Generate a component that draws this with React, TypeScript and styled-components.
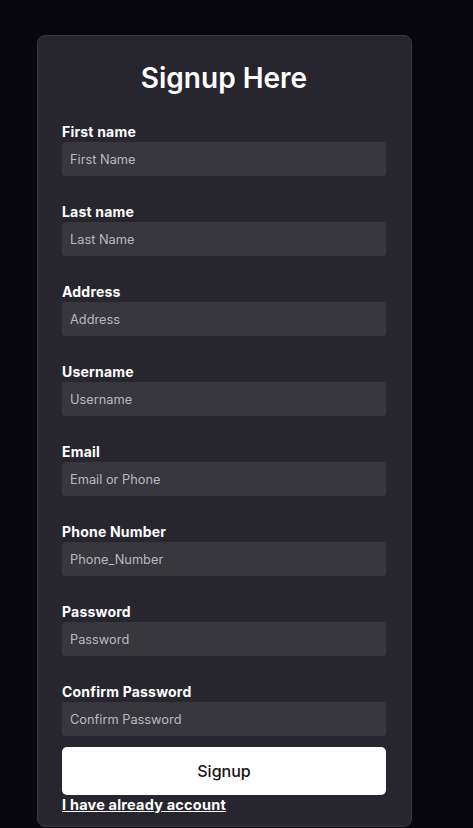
import React from "react";
import styled, { createGlobalStyle } from "styled-components";

const Global = createGlobalStyle`
  html, body { margin: 0; padding: 0; background: #08070f; }
  body { font-family: Inter, "Open Sans", sans-serif; }
  * { box-sizing: border-box; }
`;

const Page = styled.div`
  min-height: 828px;
  padding: 35px 0 0 37px;
  background: #08070f;
`;

const Card = styled.form`
  width: 375px;
  background: #27262e;
  border: 1px solid #38373e;
  border-radius: 8px;
  padding: 21px 25px 12px 24px;
  display: flex;
  flex-direction: column;
`;

const Title = styled.h1`
  margin: 0 0 23px;
  text-align: center;
  color: #ffffff;
  font-size: 28px;
  line-height: 42px;
  font-weight: 600;
`;

const Field = styled.div`
  display: flex;
  flex-direction: column;
  margin-bottom: ${(p: { $last?: boolean }) => (p.$last ? "11px" : "26px")};
`;

const Label = styled.label`
  color: #ffffff;
  font-size: 14px;
  font-weight: 700;
  letter-spacing: 0.2px;
  line-height: 19px;
  height: 20px;
`;

const Input = styled.input`
  height: 34px;
  width: 100%;
  border: none;
  outline: none;
  border-radius: 3px;
  background: #37373d;
  color: #ffffff;
  font-family: inherit;
  font-size: 12.8px;
  padding: 0 8px;
  &::placeholder { color: #b9b9bd; }
`;

const Button = styled.button`
  height: 48px;
  width: 100%;
  border: none;
  border-radius: 5px;
  background: #ffffff;
  color: #141414;
  font-family: inherit;
  font-size: 16px;
  font-weight: 500;
  cursor: pointer;
`;

const Link = styled.a`
  margin-top: 1px;
  align-self: flex-start;
  color: #ffffff;
  font-size: 14.5px;
  font-weight: 700;
  letter-spacing: 0.2px;
  line-height: 18px;
  text-decoration: underline;
`;

const fields = [
  ["First name", "First Name"],
  ["Last name", "Last Name"],
  ["Address", "Address"],
  ["Username", "Username"],
  ["Email", "Email or Phone"],
  ["Phone Number", "Phone_Number"],
  ["Password", "Password"],
  ["Confirm Password", "Confirm Password"],
];

export default function App() {
  return (
    <Page>
      <Global />
      <Card onSubmit={(e) => e.preventDefault()}>
        <Title>Signup Here</Title>
        {fields.map(([label, ph], i) => (
          <Field key={label} $last={i === fields.length - 1}>
            <Label>{label}</Label>
            <Input placeholder={ph} type={label.includes("Password") ? "password" : "text"} />
          </Field>
        ))}
        <Button type="submit">Signup</Button>
        <Link href="#">I have already account</Link>
      </Card>
    </Page>
  );
}
